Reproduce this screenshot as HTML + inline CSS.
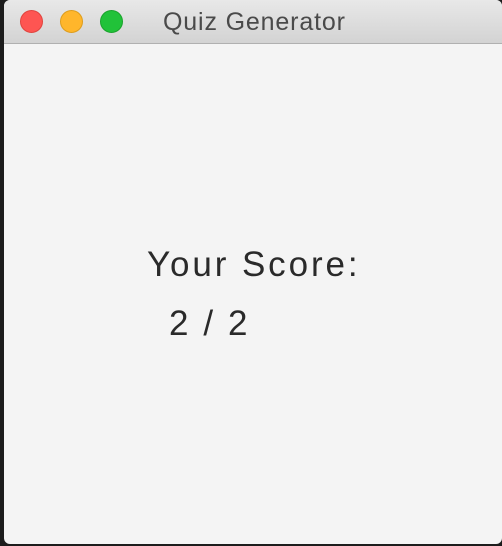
<!DOCTYPE html>
<html><head><style>
body{margin:0;width:502px;height:546px;background:#1c1c1c;position:relative;overflow:hidden;font-family:"Liberation Sans",sans-serif}
.win{position:absolute;left:4px;top:0;width:498px;height:544px;background:#f4f4f4;border-radius:6px;overflow:hidden}
.tb{height:43px;background:linear-gradient(#e8e8e8,#d3d3d3);border-bottom:1px solid #b0b0b0;position:relative}
.d{position:absolute;top:10px;width:23px;height:23px;border-radius:50%;box-sizing:border-box}
.t{position:absolute;left:159px;top:8px;font-size:25px;color:#4a4a4a;letter-spacing:0.85px}
.s{position:absolute;color:#2a2a2a;font-size:35px}
</style></head><body>
<div class="win">
<div class="tb">
<div class="d" style="left:16px;background:#fe5552;border:1px solid #e0443e"></div>
<div class="d" style="left:56px;background:#ffb62b;border:1px solid #de9d1c"></div>
<div class="d" style="left:96px;background:#21c239;border:1px solid #1aa32c"></div>
<div class="t">Quiz Generator</div>
</div>
<div class="s" style="left:143px;top:245px;letter-spacing:2.9px">Your Score:</div>
<div class="s" style="left:165px;top:304px;letter-spacing:2.6px">2 / 2</div>
</div>
</body></html>
